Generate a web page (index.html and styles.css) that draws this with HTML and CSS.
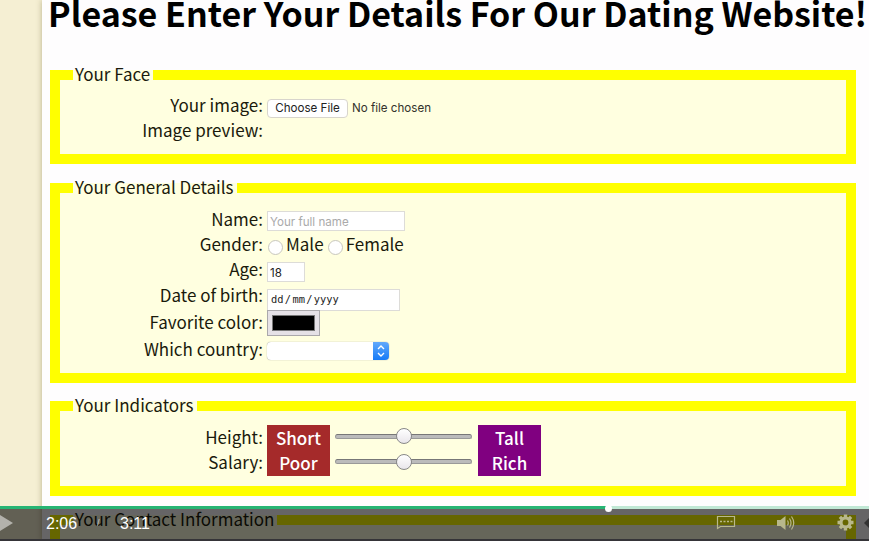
FILE: index.html
```html
<!DOCTYPE html>
<html lang="en">
<head>
<meta charset="utf-8">
<title>Dating Website</title>
<link rel="stylesheet" href="styles.css">
</head>
<body>
<main class="sheet">
  <h1>Please Enter Your Details For Our Dating Website!</h1>
  <form>
    <fieldset class="face">
      <legend>Your Face</legend>
      <div class="row"><span class="label">Your image:</span><button type="button" class="file">Choose File</button><span class="file-name">No file chosen</span></div>
      <div class="row"><span class="label">Image preview:</span></div>
    </fieldset>
    <fieldset class="general">
      <legend>Your General Details</legend>
      <div class="row"><span class="label">Name:</span><span class="input name">Your full name</span></div>
      <div class="row"><span class="label">Gender:</span><span class="radio"></span><span class="option male">Male</span><span class="radio"></span><span class="option">Female</span></div>
      <div class="row"><span class="label">Age:</span><span class="input age">18</span></div>
      <div class="row"><span class="label">Date of birth:</span><span class="input date"><span>dd</span><span>/</span><span>mm</span><span>/</span><span>yyyy</span></span></div>
      <div class="row tall"><span class="label">Favorite color:</span><span class="color"><i></i></span></div>
      <div class="row tall"><span class="label">Which country:</span><span class="select"><svg width="16" height="18" viewBox="0 0 16 18"><path d="M5 7l3-3 3 3M5 11l3 3 3-3"/></svg></span></div>
    </fieldset>
    <fieldset class="indicators">
      <legend>Your Indicators</legend>
      <div class="row"><span class="label">Height:</span><b class="low">Short</b><span class="range"><i></i></span><b class="high">Tall</b></div>
      <div class="row"><span class="label">Salary:</span><b class="low">Poor</b><span class="range"><i></i></span><b class="high">Rich</b></div>
    </fieldset>
    <fieldset class="contact">
      <legend>Your Contact Information</legend>
    </fieldset>
  </form>
</main>
<div class="player">
  <div class="progress"><div class="played"></div><div class="knob"></div></div>
  <div class="controls">
    <svg class="play" width="13" height="18" viewBox="0 0 13 18"><path d="M0 1v16l13-8z"/></svg>
    <span class="time current">2:06</span><span class="slash">/</span><span class="time total">3:11</span>
    <svg class="captions" width="20" height="15" viewBox="0 0 20 15"><path d="M1.5 13.5V1.5H18.5V11.5H4.5z" fill="none" stroke-width="1.2"/><path d="M4 6.5h2M7.500 6.500h2M11 6.500h2M14.500 6.500h2" stroke-width="1.300"/></svg>
    <svg class="volume" width="18" height="16" viewBox="0 0 18 16"><path class="solid" d="M0 5h3.500L8.500 1v14L3.500 11H0z"/><path d="M10.500 5.500q1.500 2.500 0 5M12.500 3.500q3 4.500 0 9M14.500 1.500q4.500 6.500 0 13" fill="none" stroke-width="1.200"/></svg>
    <svg class="gear" width="17" height="17" viewBox="-8.500 -8.500 17 17"><circle r="4.500" fill="none" stroke-width="3.200"/><path d="M0-8v3M0 8V5M-8 0h3M8 0H5M-5.600-5.600l2 2M5.600 5.600l-2-2M-5.600 5.600l2-2M5.600-5.600l-2 2" stroke-width="3.400"/></svg>
    <svg class="arrow" width="5" height="10" viewBox="0 0 5 10"><path d="M5 0v10L0 5z"/></svg>
  </div>
</div>
</body>
</html>
```
FILE: styles.css
```css
* { box-sizing: border-box; }
html, body { margin: 0; height: 541px; overflow: hidden; }
body {
  background: #f5efd3;
  padding-left: 42px;
  font: 17px/24px "Noto Sans CJK SC", sans-serif;
  color: #1a1a0c;
}
.sheet {
  height: 541px;
  padding-left: 8px;
  background: #fefdfe;
  box-shadow: 0 0 6px rgba(100, 90, 40, .4);
  overflow: hidden;
}
h1 {
  margin: 0 0 0 -2px;
  height: 63px;
  font-size: 34px;
  line-height: 25px;
  font-weight: 700;
  color: #000;
  white-space: nowrap;
}
fieldset {
  width: 806px;
  min-width: 0;
  margin: 0;
  padding: 6px 0 0;
  border: 10px solid #ff0;
  background: #ffffe0;
}
legend {
  height: 24px;
  margin-left: 13px;
  padding: 0 3px 0 2px;
  line-height: 22px;
  white-space: nowrap;
}
.face { height: 101px; margin-bottom: 12px; }
.general { height: 207px; margin-bottom: 11px; padding-top: 7px; }
.indicators { height: 102px; margin-bottom: 12px; padding-top: 7px; }
.contact { height: 33px; border-bottom: 0; }
.row { display: flex; align-items: center; height: 25.4px; white-space: nowrap; }
.tall { height: 26.7px; }
.label { width: 203px; margin: -1px 4px 1px 0; text-align: right; }
.tall .label { margin-top: 1px; }
.option { margin-bottom: 2px; }
.file {
  width: 81px; height: 19px; margin-top: 5px; padding: 0;
  border: 1px solid #d8d5cc; border-radius: 4px; background: #fff;
  font: 11.6px/16px Inter, sans-serif; color: #222;
}
.file-name { margin: 5px 0 0 4px; font: 11.6px/15px Inter, sans-serif; color: #33332c; }
.input {
  display: block; height: 20px; margin-top: 3px; padding-left: 2px;
  border: 1px solid #dddcd8; background: #fff;
  font: 11.6px/20px Inter, sans-serif; color: #222;
}
.name { width: 138px; color: #aaa; }
.age { width: 38px; }
.date { display: flex; gap: 1.3px; width: 133px; height: 22px; margin-top: 9px; padding-left: 3px; font: 10.4px/19px "DejaVu Sans Mono", monospace; }
.radio { width: 15px; height: 15px; margin: 5px 3px 0 1px; border: 1px solid #c8c7bd; border-radius: 50%; background: #fff; }
.male { margin-right: 3px; }
.color { width: 53px; height: 26px; margin-top: 2px; padding: 4px; border: 1px solid #aaa8ab; background: #e5e1e6; }
.color i { display: block; height: 16px; border: 1px solid #777; background: #000; }
.select { display: flex; justify-content: flex-end; width: 122px; height: 18px; margin-top: 4px; border-radius: 4px; background: #fff; box-shadow: 0 0 1px #777; overflow: hidden; }
.select svg { background: linear-gradient(#62a9fb, #167bf7); fill: none; stroke: #fff; stroke-width: 1.4; }
.low, .high { width: 63px; height: 100%; text-align: center; line-height: 25px; color: #fff; font-weight: 500; }
.low { background: #a52a2a; }
.high { background: #800080; }
.range { display: flex; align-items: center; justify-content: center; width: 137px; height: 5px; margin: 0 6px 3px 5px; border: 1px solid #999; border-top-color: #777; border-radius: 3px; background: #bbb; }
.range i { flex: none; width: 16px; height: 16px; border: 1px solid #888; border-radius: 50%; background: linear-gradient(#fff, #e9e6eb); }
.player { position: absolute; left: 0; top: 506px; width: 869px; height: 35px; }
.progress { display: flex; align-items: center; height: 3px; background: #c1e8d5; }
.played { width: 608px; height: 3px; background: #27b574; }
.knob { position: relative; width: 7px; height: 7px; margin: 1px 0 0 -3px; border-radius: 50%; background: #fff; flex: none; z-index: 1; }
.controls {
  display: flex; align-items: center; height: 32px;
  padding-bottom: 3px; border-bottom: 2px solid #353438;
  background: rgba(0, 0, 0, .6);
  font: 16px/18px "Liberation Sans", sans-serif; color: #fff;
}
.play { fill: #b3b2ac; margin-right: 33px; }
.current, .total { width: 32px; margin-top: 2px; }
.slash { width: 4px; margin: 0 19px; font-size: 9px; color: #ccc; }
.captions, .volume, .gear { stroke: #b8b88c; }
.captions { margin-left: 564px; }
.volume { margin-left: 41px; }
.solid { fill: #b8b88c; stroke: none; }
.gear { margin-left: 42px; }
.arrow { margin-left: auto; fill: #333; }
```
